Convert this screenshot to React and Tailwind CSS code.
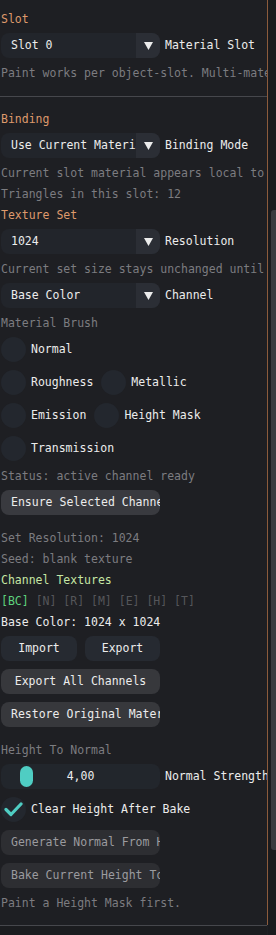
import React from "react";

const Text = ({ children, className = "" }) => (
  <div className={`h-[13px] leading-[15px] whitespace-nowrap ${className}`}>{children}</div>
);

const Arrow = () => (
  <svg width="9" height="8" viewBox="0 0 9 8">
    <polygon points="0,0 9,0 4.5,8" fill="#ececec" />
  </svg>
);

const Combo = ({ value, label }) => (
  <div className="flex items-center h-[25px] whitespace-nowrap">
    <div className="w-[159px] h-[25px] rounded-[8px] bg-[#22252b] overflow-hidden flex shrink-0">
      <div className="flex-1 pl-[10px] flex items-center overflow-hidden text-[#ececec]">{value}</div>
      <div className="w-[24px] bg-[#2b2e35] flex items-center justify-center">
        <Arrow />
      </div>
    </div>
    <div className="ml-[5px] text-[#ececec]">{label}</div>
  </div>
);

const Radio = ({ label, first }) => (
  <div className={`flex items-center ${first ? "" : "ml-[8px]"}`}>
    <div className="w-[25px] h-[25px] rounded-full bg-[#23272e] shrink-0" />
    <div className="ml-[5px] text-[#ececec] whitespace-nowrap">{label}</div>
  </div>
);

const Button = ({ children, w = "w-[159px]", bg = "bg-[#393a3f]", color = "text-[#ececec]", center = false }) => (
  <div
    className={`${w} h-[25px] rounded-[8px] ${bg} ${color} flex items-center overflow-hidden whitespace-nowrap shrink-0 ${
      center ? "justify-center" : "pl-[10px]"
    }`}
  >
    {children}
  </div>
);

export default function App() {
  return (
    <div
      className="w-[276px] h-[935px] flex bg-[#1e1f23] overflow-hidden text-[11.5px]"
      style={{ fontFamily: "'DejaVu Sans Mono', 'Liberation Mono', monospace" }}
    >
      <div className="w-[267px] h-full flex flex-col overflow-hidden shrink-0">
        <div className="h-[925px] flex flex-col gap-[8px] pt-[12px] pl-[1px] overflow-hidden">
          <Text className="text-[#de9a6c]">Slot</Text>
          <Combo value="Slot 0" label="Material Slot" />
          <Text className="text-[#7c7c80]">Paint works per object-slot. Multi-material slots are handled</Text>
          <div className="-ml-[1px] mt-[9px] mb-[7px] h-px bg-[#46474c] w-[267px]" />
          <Text className="text-[#de9a6c]">Binding</Text>
          <Combo value="Use Current Material" label="Binding Mode" />
          <Text className="text-[#7c7c80]">Current slot material appears local to this object</Text>
          <Text className="text-[#7c7c80]">Triangles in this slot: 12</Text>
          <Text className="text-[#de9a6c]">Texture Set</Text>
          <Combo value="1024" label="Resolution" />
          <Text className="text-[#7c7c80]">Current set size stays unchanged until applied</Text>
          <Combo value="Base Color" label="Channel" />
          <Text className="text-[#7c7c80]">Material Brush</Text>
          <div className="flex h-[25px]">
            <Radio label="Normal" first />
          </div>
          <div className="flex h-[25px]">
            <Radio label="Roughness" first />
            <Radio label="Metallic" />
          </div>
          <div className="flex h-[25px]">
            <Radio label="Emission" first />
            <Radio label="Height Mask" />
          </div>
          <div className="flex h-[25px]">
            <Radio label="Transmission" first />
          </div>
          <Text className="text-[#7c7c80]">Status: active channel ready</Text>
          <Button>Ensure Selected Channel</Button>
          <Text className="text-[#7c7c80] mt-[8px]">Set Resolution: 1024</Text>
          <Text className="text-[#7c7c80]">Seed: blank texture</Text>
          <Text className="text-[#c6e6a4]">Channel Textures</Text>
          <Text>
            <span className="text-[#5ed27e]">[BC]</span>
            <span className="text-[#55565a]"> [N] [R] [M] [E] [H] [T]</span>
          </Text>
          <Text className="text-[#ececec]">Base Color: 1024 x 1024</Text>
          <div className="flex gap-[8px] h-[25px]">
            <Button w="w-[76px]" bg="bg-[#262a31]" center>Import</Button>
            <Button w="w-[75px]" bg="bg-[#262a31]" center>Export</Button>
          </div>
          <Button bg="bg-[#37383c]" center>Export All Channels</Button>
          <Button bg="bg-[#37383c]">Restore Original Material</Button>
          <Text className="text-[#7c7c80] mt-[8px]">Height To Normal</Text>
          <div className="flex items-center h-[25px] whitespace-nowrap">
            <div className="relative w-[159px] h-[25px] rounded-[8px] bg-[#22262c] flex items-center justify-center shrink-0 text-[#ececec]">
              <div className="absolute left-[19px] top-[2px] w-[13px] h-[21px] rounded-full bg-[#4fcdc3]" />
              <span className="relative">4,00</span>
            </div>
            <div className="ml-[5px] text-[#ececec]">Normal Strength</div>
          </div>
          <div className="flex items-center h-[25px]">
            <div className="w-[25px] h-[25px] rounded-full bg-[#23272e] flex items-center justify-center shrink-0">
              <svg width="19" height="15" viewBox="0 0 19 15">
                <polyline points="2,7.5 7,12.5 17,2" fill="none" stroke="#4fcdc3" strokeWidth="3.2" strokeLinecap="round" strokeLinejoin="round" />
              </svg>
            </div>
            <div className="ml-[5px] text-[#ececec] whitespace-nowrap">Clear Height After Bake</div>
          </div>
          <Button bg="bg-[#2d2e32]" color="text-[#9b9b9f]">Generate Normal From Height</Button>
          <Button bg="bg-[#2d2e32]" color="text-[#9b9b9f]">Bake Current Height To Normal</Button>
          <Text className="text-[#7c7c80]">Paint a Height Mask first.</Text>
        </div>
        <div className="h-px bg-[#46474c] shrink-0" />
        <div className="flex-1 bg-[#1b1c1f]" />
      </div>
      <div className="w-px h-[925px] bg-[#8c5b3c] shrink-0" />
      <div className="w-[8px] h-full bg-[#1a1b1e] shrink-0 pt-[210px]">
        <div className="ml-[3px] w-[5px] h-[640px] rounded-l-[3px] bg-[#3a3b3f]" />
      </div>
    </div>
  );
}
